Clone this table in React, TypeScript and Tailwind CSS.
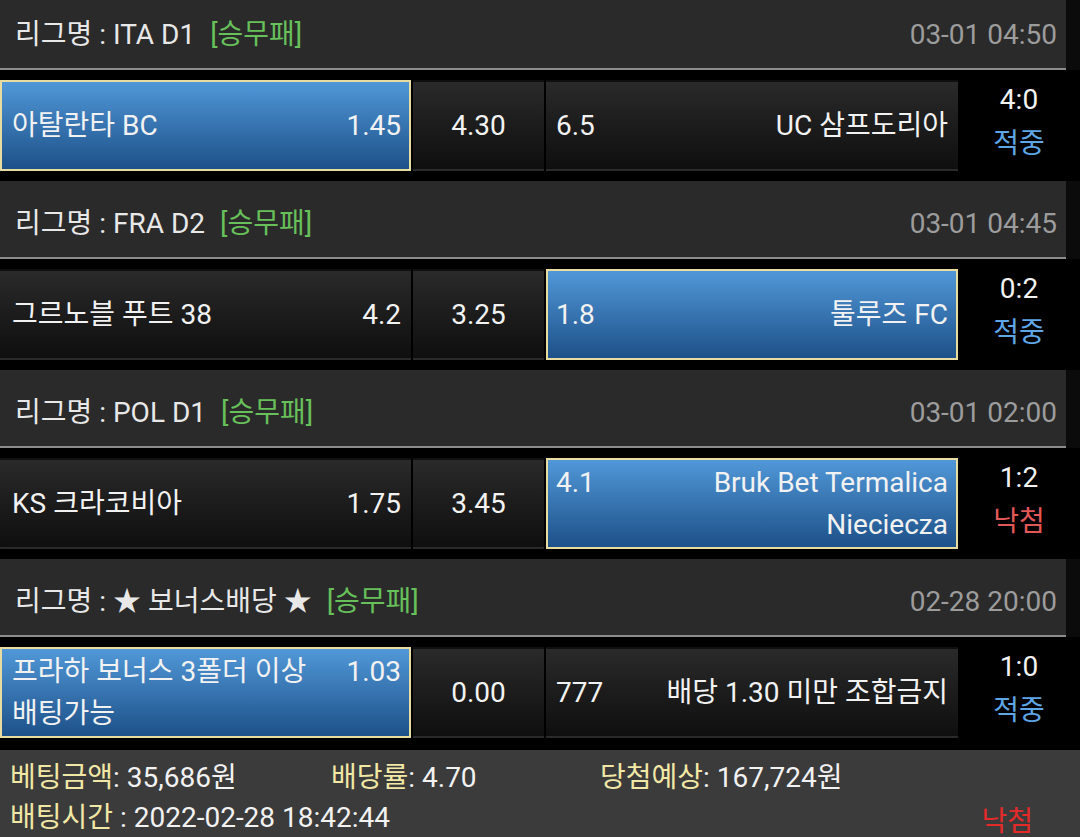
import React from "react";

type Side = { odds: string; name: string[]; picked?: boolean };
type Match = {
  league: string;
  time: string;
  home: Side;
  draw: string;
  away: Side;
  score: string;
  result: "적중" | "낙첨";
};

const matches: Match[] = [
  {
    league: "ITA D1",
    time: "03-01 04:50",
    home: { odds: "1.45", name: ["아탈란타 BC"], picked: true },
    draw: "4.30",
    away: { odds: "6.5", name: ["UC 삼프도리아"] },
    score: "4:0",
    result: "적중",
  },
  {
    league: "FRA D2",
    time: "03-01 04:45",
    home: { odds: "4.2", name: ["그르노블 푸트 38"] },
    draw: "3.25",
    away: { odds: "1.8", name: ["툴루즈 FC"], picked: true },
    score: "0:2",
    result: "적중",
  },
  {
    league: "POL D1",
    time: "03-01 02:00",
    home: { odds: "1.75", name: ["KS 크라코비아"] },
    draw: "3.45",
    away: { odds: "4.1", name: ["Bruk Bet Termalica", "Nieciecza"], picked: true },
    score: "1:2",
    result: "낙첨",
  },
  {
    league: "★ 보너스배당 ★",
    time: "02-28 20:00",
    home: { odds: "1.03", name: ["프라하 보너스 3폴더 이상", "배팅가능"], picked: true },
    draw: "0.00",
    away: { odds: "777", name: ["배당 1.30 미만 조합금지"] },
    score: "1:0",
    result: "적중",
  },
];

const cellBase = "h-[91px] flex items-center";
const blueCell =
  "bg-gradient-to-b from-[#5198d8] to-[#1d5189] border-2 border-[#e9dca0]";
const darkCell = "bg-gradient-to-b from-[#2a2a2a] to-[#0f0f0f] border-2 border-transparent";

function HomeCell({ side }: { side: Side }) {
  return (
    <div className={`${cellBase} w-[411px] pl-[10px] pr-[8px] ${side.picked ? blueCell : darkCell}`}>
      <div className="flex w-full justify-between items-start leading-[42px]">
        <div>
          {side.name.map((n) => (
            <div key={n}>{n}</div>
          ))}
        </div>
        <div className="ml-4">{side.odds}</div>
      </div>
    </div>
  );
}

function AwayCell({ side }: { side: Side }) {
  return (
    <div className={`${cellBase} w-[412px] pl-[8px] pr-[8px] ${side.picked ? blueCell : darkCell}`}>
      <div className="flex w-full justify-between items-start leading-[42px]">
        <div>{side.odds}</div>
        <div className="text-right">
          {side.name.map((n) => (
            <div key={n}>{n}</div>
          ))}
        </div>
      </div>
    </div>
  );
}

function MatchBlock({ m, last }: { m: Match; last?: boolean }) {
  return (
    <div>
      {/* league header */}
      <div className="w-[1066px] h-[78px] bg-[#2a2a2a] border-b-2 border-[#8c8c8c] flex items-center justify-between pl-[15px] pr-[9px] pt-[10px]">
        <div className="flex items-center text-[#e8e8e8]">
          <span>리그명 : {m.league}</span>
          <span className="ml-[15px] text-[#67c05a]">[승무패]</span>
        </div>
        <span className="text-[#9c9c9c]">{m.time}</span>
      </div>

      <div className={`flex items-center bg-black pt-[10px] ${last ? "pb-[12px]" : "pb-[10px]"}`}>
        <HomeCell side={m.home} />
        <div className={`${cellBase} ml-[2px] w-[131px] justify-center ${darkCell}`}>{m.draw}</div>
        <div className="ml-[2px]">
          <AwayCell side={m.away} />
        </div>
        <div className="flex-1 flex flex-col items-center leading-[44px] -mt-[8px]">
          <span>{m.score}</span>
          <span className={m.result === "적중" ? "text-[#5fa6e6]" : "text-[#e25858]"}>{m.result}</span>
        </div>
      </div>
    </div>
  );
}

export default function App() {
  return (
    <div
      className="w-[1080px] h-[837px] overflow-hidden bg-[#0b0b0b] text-[28px] text-[#f2f2f2]"
      style={{ fontFamily: "Roboto, 'Noto Sans CJK KR', 'Noto Sans', sans-serif" }}
    >
      <div className="-mt-[8px]">
        {matches.map((m, i) => (
          <MatchBlock key={m.time} m={m} last={i === matches.length - 1} />
        ))}
      </div>

      {/* bet summary */}
      <div className="bg-[#3b3b3b] h-[90px] pl-[10px] pt-[8px]">
        <div className="flex leading-[40px]">
          <div className="w-[321px]">
            <span className="text-[#f2e8a6]">베팅금액</span>: 35,686원
          </div>
          <div className="w-[269px]">
            <span className="text-[#f2e8a6]">배당률</span>: 4.70
          </div>
          <div>
            <span className="text-[#f2e8a6]">당첨예상</span>: 167,724원
          </div>
        </div>
        <div className="flex justify-between items-end pr-[47px] leading-[40px]">
          <div>
            <span className="text-[#f2e8a6]">배팅시간</span> : 2022-02-28 18:42:44
          </div>
          <span className="text-[#e52a2a] translate-y-[4px]">낙첨</span>
        </div>
      </div>
    </div>
  );
}
